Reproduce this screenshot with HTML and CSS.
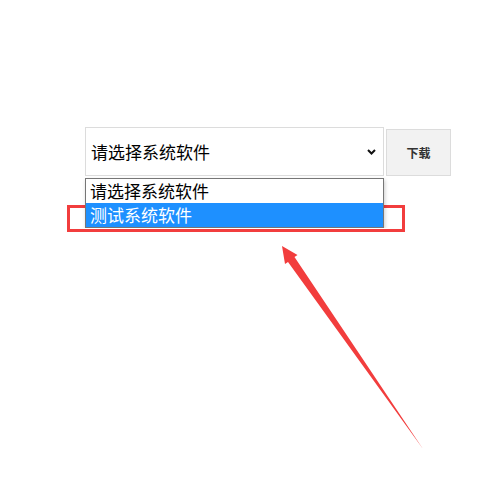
FILE: index.html
```html
<!DOCTYPE html>
<html lang="zh-CN">
<head>
  <meta charset="UTF-8" />
  <meta name="viewport" content="width=device-width, initial-scale=1" />
  <title>下载系统软件</title>
  <link rel="stylesheet" href="styles.css">
</head>
<body>
  <div class="page">
    <div class="picker">
      <div class="select-wrap">
        <div class="select-box">
          <span class="select-text">请选择系统软件</span>
          <svg class="chevron" width="9" height="6" viewBox="0 0 9 6">
            <path d="M1 1 L4.5 4.5 L8 1" fill="none" stroke="#111" stroke-width="2"/>
          </svg>
        </div>
        <!-- opened option list -->
        <div class="options">
          <div class="option">请选择系统软件</div>
          <div class="option active">测试系统软件</div>
        </div>
      </div>
      <button class="download-btn">下载</button>
    </div>
  </div>

  <!-- annotation -->
  <div class="mark-box"></div>
  <svg class="mark-arrow" width="499" height="501" viewBox="0 0 499 501">
    <polygon points="282,246 297.5,255 294.5,257 423,449 288,262 285,264" fill="#f23d3d"/>
  </svg>
</body>
</html>
```

FILE: styles.css
```css
* {
  margin: 0;
  padding: 0;
  box-sizing: border-box;
}

body {
  background: #fff;
  color: #000;
  font-family: "Noto Sans CJK SC", "Liberation Sans", sans-serif;
}

.page {
  padding: 127px 0 0 85px;
}

.picker {
  display: flex;
  align-items: flex-start;
  gap: 2px;
}

.select-wrap {
  display: flex;
  flex-direction: column;
  gap: 2px;
}

.select-box {
  width: 299px;
  height: 49px;
  border: 1px solid #dcdcdc;
  background: #fff;
  display: flex;
  align-items: center;
  justify-content: space-between;
  padding: 0 7px 0 5px;
}

.select-text {
  font-size: 17px;
  line-height: 1;
}

.download-btn {
  width: 65px;
  height: 47px;
  margin-top: 2px;
  border: 1px solid #dcdcdc;
  background: #f2f2f2;
  color: #333;
  font-family: inherit;
  font-size: 12px;
  font-weight: 700;
}

.options {
  position: relative;
  z-index: 2;
  width: 299px;
  border: 1px solid #767676;
  background: #fff;
  box-shadow: 1px 2px 4px rgba(0, 0, 0, 0.2);
}

.option {
  height: 24px;
  font-size: 17px;
  line-height: 24px;
  padding-left: 4px;
}

.option.active {
  background: #1e90ff;
  color: #fff;
}

.mark-box {
  position: absolute;
  z-index: 1;
  left: 67px;
  top: 205px;
  width: 338px;
  height: 27px;
  border: 3px solid #f23d3d;
}

.mark-arrow {
  position: absolute;
  left: 0;
  top: 0;
}
```
